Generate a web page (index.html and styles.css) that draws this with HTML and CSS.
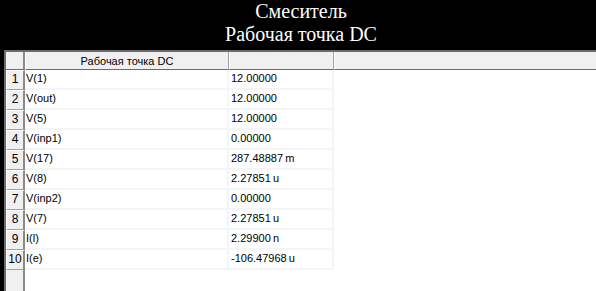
FILE: index.html
```html
<!DOCTYPE html>
<html lang="ru">
<head>
<meta charset="utf-8">
<title>Смеситель</title>
<link rel="stylesheet" href="styles.css">
</head>
<body>
<header class="title">
  <div class="title-line">Смеситель</div>
  <div class="title-line">Рабочая точка DC</div>
</header>
<div class="grid">
  <div class="corner"></div>
  <div class="colhead">Рабочая точка DC</div>
  <div class="colhead"></div>
  <div class="colhead colhead-fill"></div>

  <div class="rowhead">1</div><div class="cell">V(1)</div><div class="cell val">12.00000</div><div class="blank"></div>
  <div class="rowhead">2</div><div class="cell">V(out)</div><div class="cell val">12.00000</div><div class="blank"></div>
  <div class="rowhead">3</div><div class="cell">V(5)</div><div class="cell val">12.00000</div><div class="blank"></div>
  <div class="rowhead">4</div><div class="cell">V(inp1)</div><div class="cell val">0.00000</div><div class="blank"></div>
  <div class="rowhead">5</div><div class="cell">V(17)</div><div class="cell val">287.48887&#8201;m</div><div class="blank"></div>
  <div class="rowhead">6</div><div class="cell">V(8)</div><div class="cell val">2.27851&#8201;u</div><div class="blank"></div>
  <div class="rowhead">7</div><div class="cell">V(inp2)</div><div class="cell val">0.00000</div><div class="blank"></div>
  <div class="rowhead">8</div><div class="cell">V(7)</div><div class="cell val">2.27851&#8201;u</div><div class="blank"></div>
  <div class="rowhead">9</div><div class="cell">I(l)</div><div class="cell val">2.29900&#8201;n</div><div class="blank"></div>
  <div class="rowhead">10</div><div class="cell">I(e)</div><div class="cell val">-106.47968&#8201;u</div><div class="blank"></div>

  <div class="rowhead-fill"></div><div class="blank-rest"></div>
</div>
</body>
</html>
```
FILE: styles.css
```css
html, body {
  margin: 0;
  padding: 0;
  background: #000;
}
body {
  width: 596px;
  height: 291px;
  overflow: hidden;
}
.title {
  height: 50px;
  box-sizing: border-box;
  color: #fff;
  font-family: "Liberation Serif", "Times New Roman", serif;
  font-size: 20px;
  line-height: 23px;
  text-align: center;
  padding-left: 6px;
}
.grid {
  margin-left: 4px;
  height: 241px;
  box-sizing: border-box;
  border-left: 2px solid #6b6b6b;
  border-top: 2px solid #6b6b6b;
  background: #fff;
  display: grid;
  grid-template-columns: 19px 204px 105px 1fr;
  grid-template-rows: 18px repeat(10, 20px) 1fr;
  font-family: "Liberation Sans", Arial, sans-serif;
  font-size: 11px;
  color: #000;
}
.corner,
.colhead {
  background: #f0f0f0;
  box-sizing: border-box;
  border-bottom: 1px solid #6b6b6b;
  border-right: 1px solid #a0a0a0;
  border-left: 1px solid #fff;
  text-align: center;
  line-height: 18px;
  white-space: nowrap;
}
.corner {
  border-left: 0;
  border-right: 2px solid #8a8a8a;
}
.colhead-fill {
  border-right: 0;
}
.rowhead {
  background: #f0f0f0;
  box-sizing: border-box;
  border-top: 1px solid #fff;
  border-left: 1px solid #fff;
  border-bottom: 1px solid #a0a0a0;
  border-right: 2px solid #8a8a8a;
  text-align: center;
  line-height: 17px;
  font-size: 12px;
}
.rowhead-fill {
  background: #f0f0f0;
  border-right: 2px solid #8a8a8a;
}
.cell {
  box-sizing: border-box;
  border-bottom: 2px solid #f2f5fa;
  border-right: 2px solid #f2f5fa;
  padding-left: 1px;
  line-height: 17px;
  white-space: nowrap;
}
.val {
  padding-left: 2px;
}
.blank {
  background: #fff;
}
.blank-rest {
  grid-column: 2 / 5;
  background: #fff;
}
```
